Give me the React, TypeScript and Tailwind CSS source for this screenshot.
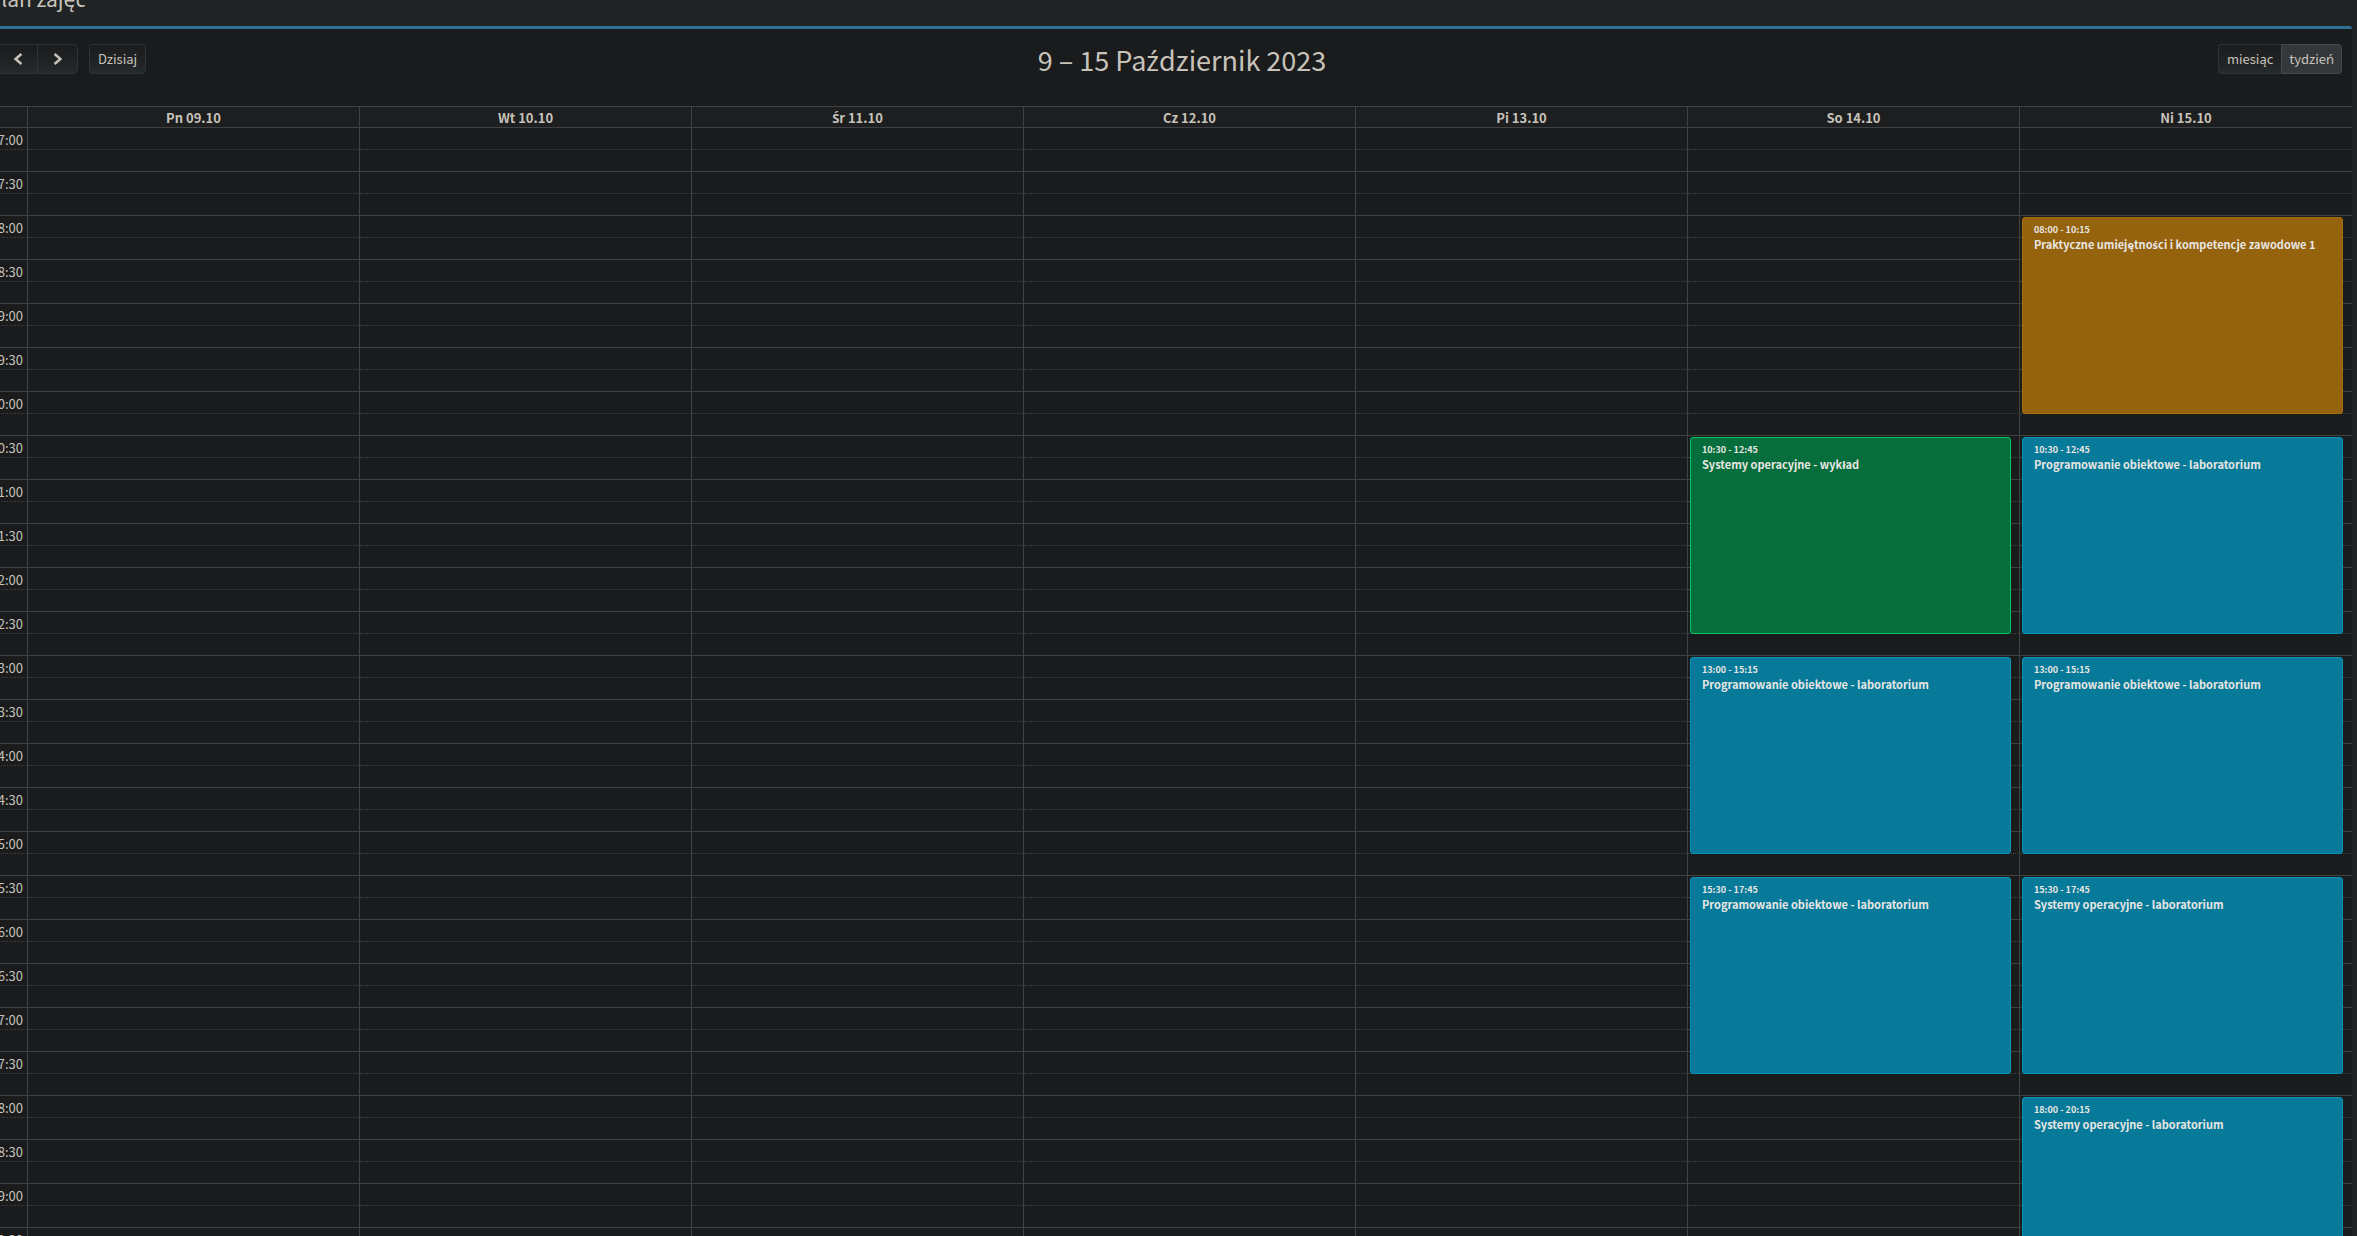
import React from "react";

const days = ["Pn 09.10", "Wt 10.10", "Śr 11.10", "Cz 12.10", "Pi 13.10", "So 14.10", "Ni 15.10"];

const FIRST_MINUTE = 7 * 60;
const SLOT_MINUTES = 15;
const slots = Array.from({ length: 56 }, (_, i) => FIRST_MINUTE + i * SLOT_MINUTES);

type Kind = "lecture" | "lab" | "practice";
type Entry = { day: number; start: string; end: string; title: string; kind: Kind };

const entries: Entry[] = [
  { day: 5, start: "10:30", end: "12:45", title: "Systemy operacyjne - wykład", kind: "lecture" },
  { day: 5, start: "13:00", end: "15:15", title: "Programowanie obiektowe - laboratorium", kind: "lab" },
  { day: 5, start: "15:30", end: "17:45", title: "Programowanie obiektowe - laboratorium", kind: "lab" },
  { day: 6, start: "08:00", end: "10:15", title: "Praktyczne umiejętności i kompetencje zawodowe 1", kind: "practice" },
  { day: 6, start: "10:30", end: "12:45", title: "Programowanie obiektowe - laboratorium", kind: "lab" },
  { day: 6, start: "13:00", end: "15:15", title: "Programowanie obiektowe - laboratorium", kind: "lab" },
  { day: 6, start: "15:30", end: "17:45", title: "Systemy operacyjne - laboratorium", kind: "lab" },
  { day: 6, start: "18:00", end: "20:15", title: "Systemy operacyjne - laboratorium", kind: "lab" },
];

const kindStyles: Record<Kind, string> = {
  lecture: "border-[#00c765] bg-[#066e3d]",
  lab: "border-[#0592b5] bg-[#077a99]",
  practice: "border-[#a96c0a] bg-[#95620d]",
};

function slotLine(time: string) {
  const [h, m] = time.split(":").map(Number);
  return (h * 60 + m - FIRST_MINUTE) / SLOT_MINUTES + 1;
}

function label(minutes: number) {
  return `${String(Math.floor(minutes / 60)).padStart(2, "0")}:${String(minutes % 60).padStart(2, "0")}`;
}

function Polish({ children }: { children: string }) {
  return (
    <>
      {children.split(/([źśćńŹŚĆŃ])/).map((part, i) =>
        i % 2 ? (
          <span key={i} className="font-['Noto_Sans',sans-serif]">
            {part}
          </span>
        ) : (
          part
        ),
      )}
    </>
  );
}

const button =
  "h-[30px] border border-[#2f3335] bg-linear-to-b from-[#1a1b1c] to-[#252a2c]";

function Chevron({ d }: { d: string }) {
  return (
    <svg viewBox="0 0 10 12" className="mx-auto h-3 w-[10px]" fill="none" stroke="currentColor" strokeWidth="2.5" aria-hidden="true">
      <path d={d} />
    </svg>
  );
}

function Toolbar() {
  return (
    <div className="flex h-[47px] items-start justify-between px-[10px] pt-[15px] text-[13px] leading-5">
      <div className="flex gap-[11px]">
        <div className="flex">
          <button type="button" aria-label="Poprzedni tydzień" className={`${button} w-[39px] rounded-l border-r-0`}>
            <Chevron d="M8.4 1 2.6 6 8.4 11" />
          </button>
          <button type="button" aria-label="Następny tydzień" className={`${button} w-[41px] rounded-r`}>
            <Chevron d="M1.6 1 7.4 6 1.6 11" />
          </button>
        </div>
        <button type="button" className={`${button} rounded px-2`}>Dzisiaj</button>
      </div>
      <h2 className="text-[27px] leading-8">
        <Polish>9 – 15 Październik 2023</Polish>
      </h2>
      <div className="flex">
        <button type="button" className={`${button} rounded-l border-r-0 px-2`}>miesiąc</button>
        <button
          type="button"
          aria-pressed="true"
          className="h-[30px] rounded-r border border-[#44484a] bg-[#34383a] px-[7px]"
        >
          <Polish>tydzień</Polish>
        </button>
      </div>
    </div>
  );
}

function Week() {
  return (
    <div className="relative mt-[30px]">
      <table className="w-full table-fixed border-separate border-spacing-0">
        <thead>
          <tr className="h-[21px] bg-[#1c1e1f] text-[13px] leading-[18px]">
            <th className="w-10 border-t border-r border-[#3f4143] p-0" aria-label="Godzina" />
            {days.map((d) => (
              <th key={d} scope="col" className="border-t border-r border-[#3f4143] p-0 pt-[2px] font-bold last:border-r-0">
                <Polish>{d}</Polish>
              </th>
            ))}
          </tr>
        </thead>
        <tbody>
          {slots.map((minutes) => {
            const major = minutes % 30 === 0;
            const line = major ? "border-t-[#3f4143]" : "border-t-[#3f4143] [border-top-style:dotted]";
            return (
              <tr key={minutes} className="h-[22px]">
                <th
                  scope="row"
                  className={`border-t border-r border-r-[#3f4143] p-0 pt-[2px] pr-1 text-right text-[13px] leading-[18px] font-normal ${line}`}
                >
                  {major ? label(minutes) : null}
                </th>
                {days.map((d) => (
                  <td key={d} className={`border-t border-r border-r-[#3f4143] p-0 last:border-r-0 ${line}`} />
                ))}
              </tr>
            );
          })}
        </tbody>
      </table>
      <div className="absolute inset-x-0 top-[22px] grid auto-rows-[22px] grid-cols-[40px_repeat(7,minmax(0,1fr))]">
        {entries.map((e) => (
          <a
            key={`${e.day}-${e.start}`}
            href="#"
            className={`mt-px mr-[9px] ml-[2px] rounded-[3px] border px-[11px] pt-[5px] font-bold text-[#e8e6e3] ${kindStyles[e.kind]}`}
            style={{ gridColumn: e.day + 2, gridRow: `${slotLine(e.start)} / ${slotLine(e.end)}` }}
          >
            <div className="text-[9px] leading-[14px]">
              {e.start} - {e.end}
            </div>
            <div className="text-[11px] leading-[14px]">
              <Polish>{e.title}</Polish>
            </div>
          </a>
        ))}
      </div>
    </div>
  );
}

export default function App() {
  return (
    <div className="h-screen overflow-hidden bg-[#202424] font-['Noto_Sans_CJK_JP','Noto_Sans',sans-serif] text-[#c8c3ba]">
      <div className="-mt-[18px] -ml-3 pr-[5px]">
        <h1 className="h-11 text-[21px] leading-8">
          <Polish>Plan zajęć</Polish>
        </h1>
        <main className="rounded-t-[3px] border-t-[3px] border-[#2f6f94] bg-[#1a1b1c]">
          <Toolbar />
          <Week />
        </main>
      </div>
    </div>
  );
}
